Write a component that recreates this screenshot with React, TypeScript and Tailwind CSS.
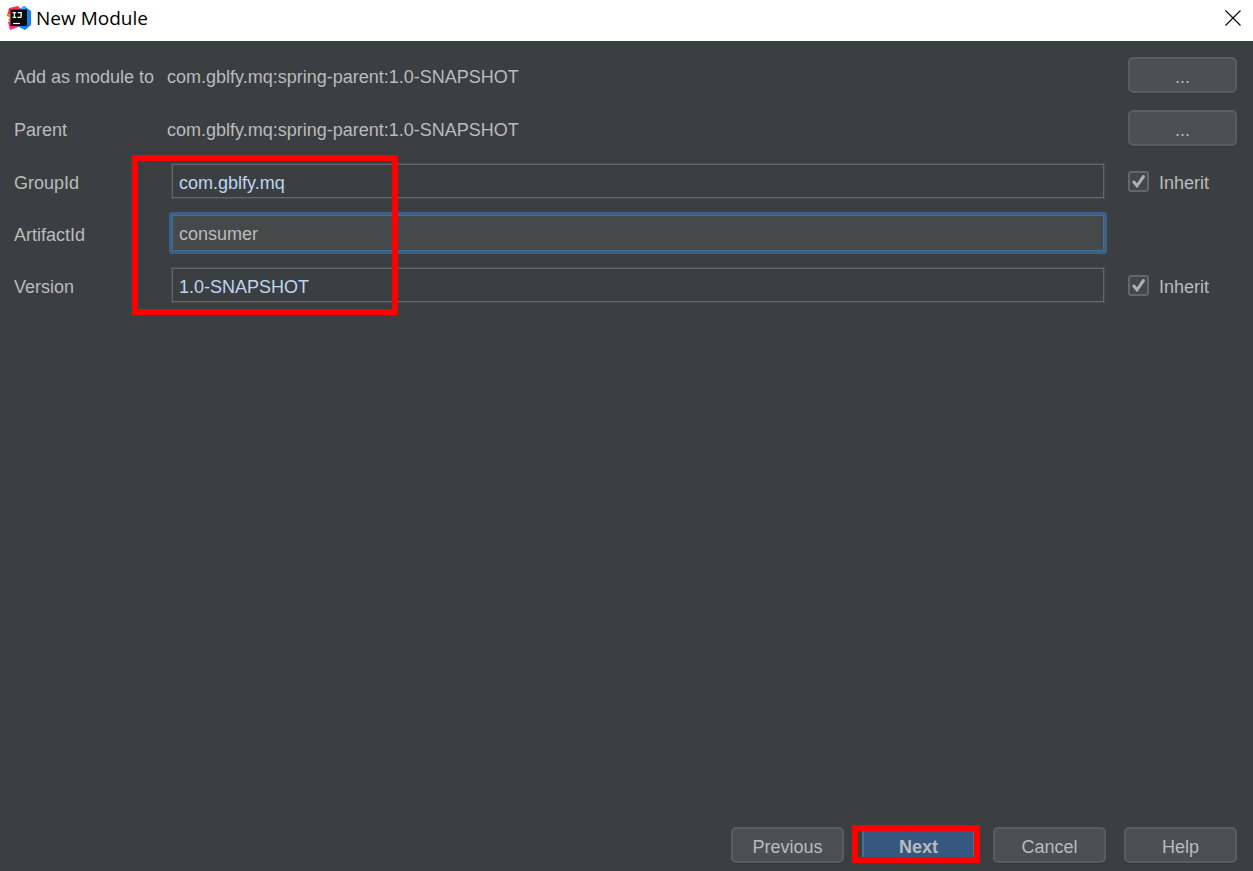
import { useState } from 'react'
import type { ReactNode } from 'react'

const PARENT_MODULE = 'com.gblfy.mq:spring-parent:1.0-SNAPSHOT'

function IdeaLogo() {
  return (
    <svg viewBox="0 0 24 24" className="size-6 shrink-0" aria-hidden="true">
      <path d="M2 2 L11 0 L15 4 L8 12 L0 10 Z" fill="#fe3155" />
      <path d="M0 9 L6 6 L6 18 L1 14 L3 12 Z" fill="#fd8224" />
      <path d="M1 16 L8 14 L14 20 L3 24 Z" fill="#fd2b70" />
      <path d="M12 4 L17 0 L24 5 L24 19 L18 24 L10 20 Z" fill="#0a84f7" />
      <path d="M12 3.5 L17 0 L19 4 Z" fill="#3ea6f5" />
      <rect x="3.5" y="3.5" width="16.5" height="16.5" fill="#0a0a0a" />
      <path d="M5.6 6.6 H9.2 M7.4 6.6 V11.4 M5.6 11.4 H9.2 M10.8 6.6 H14.2 V10.2 Q14.2 11.4 13 11.4 H10.6" fill="none" stroke="#fff" strokeWidth="1.3" />
      <path d="M6 17.5 H13" stroke="#fff" strokeWidth="1.2" />
    </svg>
  )
}

function TitleBar() {
  return (
    <header className="flex h-[41px] shrink-0 items-center justify-between bg-white pr-3 pb-1.5 pl-[7px] text-black">
      <div className="flex items-center gap-[5px]">
        <IdeaLogo />
        <h1 className="font-['Open_Sans',sans-serif] text-[19px] leading-6">New Module</h1>
      </div>
      <button type="button" aria-label="Close" className="size-4">
        <svg viewBox="0 0 16 16" className="size-4" fill="none" stroke="currentColor" strokeWidth="1.1">
          <path d="M0.5 0.5 L15.5 15.5 M15.5 0.5 L0.5 15.5" />
        </svg>
      </button>
    </header>
  )
}

interface RowProps {
  label: string
  htmlFor?: string
  children: ReactNode
}

function Row({ label, htmlFor, children }: RowProps) {
  return (
    <div className="grid h-9 grid-cols-[153px_1fr_109px] grid-rows-[36px] items-center">
      {htmlFor
        ? <label htmlFor={htmlFor} className="pt-[3px]">{label}</label>
        : <span className="pt-[3px]">{label}</span>}
      {children}
    </div>
  )
}

function BrowseButton({ label }: { label: string }) {
  return (
    <button type="button" aria-label={label} className="h-9 rounded-[5px] border-2 border-[#595d5e] bg-[#4c5052] pt-[3px] shadow-[0_1px_1px_#35383a]">
      ...
    </button>
  )
}

interface FieldProps {
  id: string
  value: string
  onChange: (value: string) => void
}

function Field({ id, value, onChange }: FieldProps) {
  return (
    <input
      id={id}
      type="text"
      value={value}
      onChange={e => onChange(e.target.value)}
      className="mr-6 ml-[5px] h-[34px] border border-[#646667] bg-[#3c3f41] px-1.5 pt-1 text-[#bbd6f0] shadow-[0_0_0_1px_#4a4d4f] outline-none"
    />
  )
}

function Inherit({ id }: { id: string }) {
  const [checked, setChecked] = useState(true)

  return (
    <label htmlFor={id} className="flex items-center gap-2.5">
      <span className="grid size-[21px] place-items-center">
        <input
          id={id}
          type="checkbox"
          checked={checked}
          onChange={e => setChecked(e.target.checked)}
          className="peer col-start-1 row-start-1 size-[21px] appearance-none rounded-[3px] border-2 border-[#646768] bg-[#43494a]"
        />
        <svg viewBox="0 0 21 21" className="pointer-events-none invisible col-start-1 row-start-1 size-[21px] peer-checked:visible" fill="none" stroke="#b0b0b0" strokeWidth="3" strokeLinecap="round">
          <path d="M5.8 11 L9 14.8 L15.4 5.6" />
        </svg>
      </span>
      <span className="pt-[3px]">Inherit</span>
    </label>
  )
}

function FooterButton({ children }: { children: ReactNode }) {
  return (
    <button type="button" className="h-9 w-[113px] rounded-[5px] border-2 border-[#595d5e] bg-[#4c5052] pt-[3px] shadow-[0_1px_1px_#35383a]">
      {children}
    </button>
  )
}

export default function App() {
  const [groupId, setGroupId] = useState('com.gblfy.mq')
  const [artifactId, setArtifactId] = useState('consumer')
  const [version, setVersion] = useState('1.0-SNAPSHOT')

  return (
    <div className="flex min-h-screen flex-col bg-[#3c3f41] font-['Liberation_Sans',Arial,sans-serif] text-lg leading-6 text-[#bbbbbb]">
      <TitleBar />

      <main className="flex flex-1 flex-col gap-[17px] pt-4 pr-4 pl-3.5">
        <Row label="Add as module to">
          <span className="pt-[3px]">{PARENT_MODULE}</span>
          <BrowseButton label="Choose module" />
        </Row>
        <Row label="Parent">
          <span className="pt-[3px]">{PARENT_MODULE}</span>
          <BrowseButton label="Choose parent" />
        </Row>

        <div className="relative flex flex-col gap-4">
          <Row label="GroupId" htmlFor="groupId">
            <Field id="groupId" value={groupId} onChange={setGroupId} />
            <Inherit id="inheritGroupId" />
          </Row>
          <Row label="ArtifactId" htmlFor="artifactId">
            <input
              id="artifactId"
              type="text"
              value={artifactId}
              onChange={e => setArtifactId(e.target.value)}
              className="-my-1 mr-[21px] ml-0.5 h-[42px] rounded-[3px] border-3 border-[#3d6185] bg-[#45494a] px-[7px] pt-[3px] shadow-[inset_0_0_0_1px_#466d94] outline-none"
            />
          </Row>
          <Row label="Version" htmlFor="version">
            <Field id="version" value={version} onChange={setVersion} />
            <Inherit id="inheritVersion" />
          </Row>
          {/* highlight over the coordinates */}
          <div className="pointer-events-none absolute -top-2 -bottom-3 left-[118px] w-[266px] border-6 border-[#ff0000]" />
        </div>
      </main>

      <footer className="flex justify-end gap-[18px] pr-4 pb-2">
        <FooterButton>Previous</FooterButton>
        <div className="relative">
          <button type="button" className="h-9 w-[113px] rounded-[5px] border-2 border-[#4c708c] bg-[#365880] pt-[3px] font-bold">
            Next
          </button>
          <div className="pointer-events-none absolute -top-0.5 -right-[5px] bottom-0 -left-2.5 border-6 border-[#ff0000]" />
        </div>
        <FooterButton>Cancel</FooterButton>
        <FooterButton>Help</FooterButton>
      </footer>
    </div>
  )
}
